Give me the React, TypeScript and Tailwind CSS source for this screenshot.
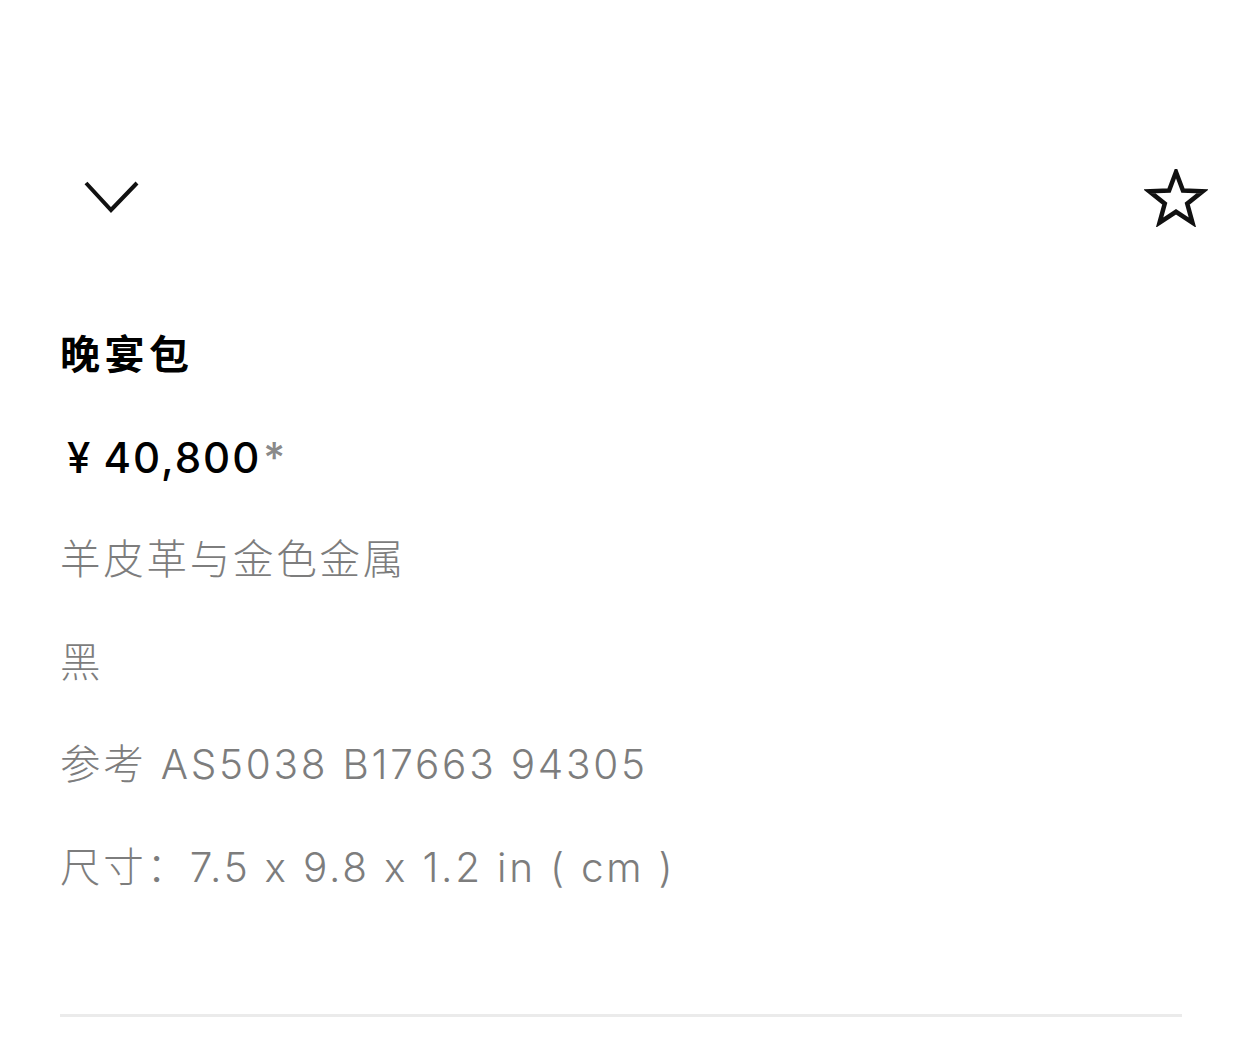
const details = [
  '羊皮革与金色金属',
  '黑',
  '参考 AS5038 B17663 94305',
  '尺寸：7.5 x 9.8 x 1.2 in ( cm )',
];

const font = { fontFamily: 'Inter, "Noto Sans CJK SC", sans-serif' };

function StarOutline() {
  return (
    <svg width="64" height="58" viewBox="0 0 64 58" fill="none">
      <polygon
        points="32,3 38.94,21.45 58.63,22.35 43.22,34.65 48.46,53.65 32,42.8 15.54,53.65 20.78,34.65 5.37,22.35 25.06,21.45"
        stroke="#111"
        strokeWidth="4.5"
        strokeLinejoin="miter"
      />
    </svg>
  );
}

export default function App() {
  return (
    <div className="min-h-[1047px] w-full bg-white" style={font}>
      {/* Top bar */}
      <div className="flex items-center justify-between pt-[169px] pl-[84px] pr-[34px]">
        <svg width="56" height="34" viewBox="0 0 56 34" fill="none" aria-hidden>
          <polyline points="2,2 27,29 53,2" stroke="#111" strokeWidth="4" fill="none" />
        </svg>
        <StarOutline />
      </div>

      {/* Product info */}
      <div className="px-[60px] pt-[77px]">
        <h1 className="text-[40px] leading-[102.5px] font-bold text-black tracking-[4.5px]">晚宴包</h1>
        <p className="pl-[7px] text-[42px] leading-[102.5px] font-medium text-black tracking-[2px]">
          <span className="mr-[11px]">¥</span>40,800<span className="ml-[2px] text-[#8a8a8a]">*</span>
        </p>
        {details.map((line) => (
          <p key={line} className="text-[40.5px] leading-[102.5px] font-light text-[#7d7d7d] tracking-[2.75px]">
            {line}
          </p>
        ))}
      </div>

      <div className="mx-[60px] mt-[95px] h-[3px] bg-[#ebebeb]" />
    </div>
  );
}
